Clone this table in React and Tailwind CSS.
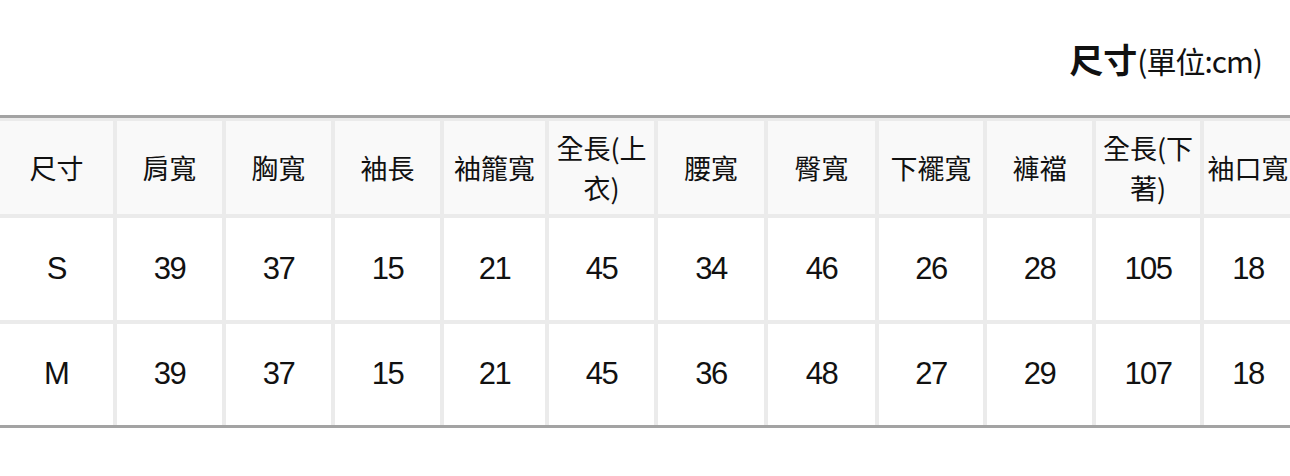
const headers = [
  "尺寸",
  "肩寬",
  "胸寬",
  "袖長",
  "袖籠寬",
  "全長(上衣)",
  "腰寬",
  "臀寬",
  "下襬寬",
  "褲襠",
  "全長(下著)",
  "袖口寬",
];

const rows = [
  { size: "S", values: [39, 37, 15, 21, 45, 34, 46, 26, 28, 105, 18] },
  { size: "M", values: [39, 37, 15, 21, 45, 36, 48, 27, 29, 107, 18] },
];

const cjk = { fontFamily: '"Noto Sans CJK TC", "Noto Sans", sans-serif' };
const latin = { fontFamily: '"Liberation Sans", Arial, sans-serif' };

const App = () => {
  return (
    <div className="w-[1290px] h-[476px] bg-white overflow-hidden text-[#111]">
      <div className="h-[115px] flex items-baseline justify-end pr-[28px] pt-[42px]" style={cjk}>
        <span className="text-[34px] font-bold leading-none">尺寸</span>
        <span className="text-[30px] leading-none tracking-[-1px]">(單位:cm)</span>
      </div>

      <div className="border-t-[3px] border-b-[3px] border-[#a3a3a3] bg-[#ebebeb] pt-[3px] w-[1292px]">
        <div className="grid grid-cols-[113px_105px_105px_105px_101px_105px_106px_107px_104px_105px_104px_88px] gap-[4px]">
          {headers.map((h) => (
            <div
              key={h}
              className="h-[93px] bg-[#f9f9f9] flex items-center justify-center text-center text-[27px] leading-[40px] px-[2px]"
              style={cjk}
            >
              {h}
            </div>
          ))}

          {rows.map((r, i) => (
            <Row key={r.size} row={r} height={i === 0 ? "h-[102px]" : "h-[101px]"} />
          ))}
        </div>
      </div>
    </div>
  );
};

const Row = ({ row, height }) => (
  <>
    <div className={`${height} bg-white flex items-center justify-center text-[31px] tracking-[-1px]`} style={latin}>
      {row.size}
    </div>
    {row.values.map((v, idx) => (
      <div
        key={idx}
        className={`${height} bg-white flex items-center justify-center text-[31px] tracking-[-1.5px]`}
        style={latin}
      >
        {v}
      </div>
    ))}
  </>
);

export default App;
